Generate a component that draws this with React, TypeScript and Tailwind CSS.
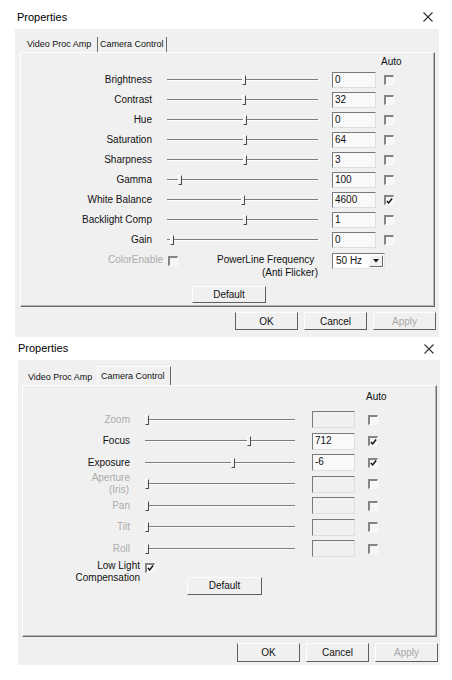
import React from "react";

// --- small classic win32 controls ---

function CloseX() {
  return (
    <svg width="10" height="10" viewBox="0 0 10 10" className="block">
      <path d="M0.5 0.5 L9.5 9.5 M9.5 0.5 L0.5 9.5" stroke="#333" strokeWidth="1.1" fill="none" />
    </svg>
  );
}

function Slider({ className, thumb }: { className: string; thumb: number }) {
  return (
    <div className={`relative h-[12px] ${className}`}>
      <div className="absolute left-0 right-0 top-[5px] h-[2px] border-t border-t-[#7d7d7d] border-b border-b-[#fdfdfd]" />
      <div
        className="absolute top-[1px] h-[10px] w-[4px] border-l border-t border-l-[#fdfdfd] border-t-[#fdfdfd] border-r border-b border-r-[#4a4a4a] border-b-[#4a4a4a] bg-[#f0f0f0]"
        style={{ left: thumb }}
      />
    </div>
  );
}

function EditBox({ value, className, disabled }: { value?: string; className: string; disabled?: boolean }) {
  return (
    <div
      className={`border-t border-l border-t-[#7a7a7a] border-l-[#7a7a7a] border-r border-b border-r-[#dedede] border-b-[#dedede] pl-[2px] text-[10px] leading-[14px] text-[#111] ${
        disabled ? "bg-[#f0f0f0]" : "bg-[#f9f9f9]"
      } ${className}`}
    >
      {value}
    </div>
  );
}

function Check({ checked }: { checked?: boolean }) {
  return (
    <div className="flex h-[10px] w-[10px] shrink-0 items-center justify-center border-t-2 border-l-2 border-t-[#858585] border-l-[#858585] border-r border-b border-r-[#fafafa] border-b-[#fafafa] bg-[#f6f6f6]">
      {checked && (
        <svg width="8" height="8" viewBox="0 0 8 8" className="block">
          <path d="M1 4 L3 6.2 L7 1.2" stroke="#111" strokeWidth="1.7" fill="none" />
        </svg>
      )}
    </div>
  );
}

function Btn({ label, className, disabled, dark }: { label: string; className: string; disabled?: boolean; dark?: boolean }) {
  return (
    <div
      className={`flex items-center justify-center border bg-[#f0f0f0] text-[10px] border-t-[#fdfdfd] border-r-[#5f5f5f] border-b-[#5f5f5f] ${
        dark ? "border-l-[#5f5f5f]" : "border-l-[#fdfdfd]"
      } ${disabled ? "text-[#a8a8a8]" : "text-[#111]"} ${className}`}
    >
      {label}
    </div>
  );
}

// --- data ---
const procRows = [
  { name: "Brightness", value: "0", thumb: 75 },
  { name: "Contrast", value: "32", thumb: 75 },
  { name: "Hue", value: "0", thumb: 76 },
  { name: "Saturation", value: "64", thumb: 76 },
  { name: "Sharpness", value: "3", thumb: 76 },
  { name: "Gamma", value: "100", thumb: 11 },
  { name: "White Balance", value: "4600", thumb: 74, auto: true },
  { name: "Backlight Comp", value: "1", thumb: 76 },
  { name: "Gain", value: "0", thumb: 3 },
];

const camRows = [
  { name: "Zoom", thumb: 0, disabled: true },
  { name: "Focus", value: "712", thumb: 102, auto: true },
  { name: "Exposure", value: "-6", thumb: 86, auto: true },
  { name: "Aperture", sub: "(Iris)", thumb: 0, disabled: true },
  { name: "Pan", thumb: 0, disabled: true },
  { name: "Tilt", thumb: 0, disabled: true },
  { name: "Roll", thumb: 0, disabled: true },
];

export default function App() {
  return (
    <div className="h-[680px] w-[452px] overflow-hidden bg-white font-['Liberation_Sans',Arial,sans-serif] text-[#111]">
      {/* ===== Dialog 1 : Video Proc Amp ===== */}
      <div className="flex h-[29px] items-center justify-between pl-[17px] pr-[19px] pt-[5px]">
        <span className="text-[11px] leading-[13px] text-black">Properties</span>
        <CloseX />
      </div>
      <div className="ml-[15px] h-[308px] w-[424px] bg-[#f0f0f0] pl-[5px] pt-[8px]">
        {/* tabs */}
        <div className="flex h-[15px] items-end whitespace-nowrap">
          <div className="h-[15px] w-[78px] border-r border-r-[#6a6a6a] pl-[7px] text-[9px] leading-[14px]">
            Video Proc Amp
          </div>
          <div className="h-[15px] w-[69px] border-r border-r-[#6a6a6a] pl-[2px] text-[9px] leading-[14px]">
            Camera Control
          </div>
        </div>
        <div className="h-[255px] w-[415px] border-l border-t border-l-[#fdfdfd] border-t-[#fdfdfd] border-r border-b border-r-[#6a6a6a] border-b-[#6a6a6a] shadow-[inset_-1px_-1px_0_#b4b4b4]">
          <div className="h-[17px] pl-[360px] pt-[3px] text-[10px] leading-[12px]">Auto</div>
          {procRows.map((r) => (
            <div key={r.name} className="flex h-[20px] items-center">
              <div className="w-[131px] text-right text-[10px] leading-[12px]">{r.name}</div>
              <Slider className="ml-[15px] w-[151px]" thumb={r.thumb} />
              <EditBox className="ml-[14px] h-[16px] w-[44px]" value={r.value} />
              <div className="ml-[8px]">
                <Check checked={r.auto} />
              </div>
            </div>
          ))}
          <div className="flex h-[36px] items-start">
            <div className="mt-[4px] w-[142px] text-right text-[10px] leading-[12px] text-[#ababab]">ColorEnable</div>
            <div className="ml-[5px] mt-[6px]">
              <Check />
            </div>
            <div className="ml-[39px] mt-[3px] w-[101px] text-right text-[10px] leading-[13px]">
              <div className="text-left">PowerLine Frequency</div>
              <div>(Anti Flicker)</div>
            </div>
            <div className="ml-[14px] mt-[3px] flex h-[16px] w-[53px] items-center justify-between border-t border-l border-t-[#7a7a7a] border-l-[#7a7a7a] border-r border-b border-r-[#e5e5e5] border-b-[#e5e5e5] bg-white pl-[3px] pr-[1px]">
              <span className="text-[10px] leading-[12px]">50 Hz</span>
              <div className="flex h-[12px] w-[14px] items-center justify-center border border-t-[#fdfdfd] border-l-[#fdfdfd] border-r-[#6a6a6a] border-b-[#6a6a6a] bg-[#f0f0f0]">
                <svg width="6" height="4" viewBox="0 0 6 4" className="block">
                  <path d="M0 0 L6 0 L3 3.5 Z" fill="#111" />
                </svg>
              </div>
            </div>
          </div>
          <div className="pl-[171px]">
            <Btn label="Default" className="h-[17px] w-[74px]" />
          </div>
        </div>
        <div className="mt-[5px] flex pl-[215px]">
          <Btn label="OK" className="h-[18px] w-[63px]" dark />
          <Btn label="Cancel" className="ml-[6px] h-[18px] w-[63px]" />
          <Btn label="Apply" className="ml-[6px] h-[18px] w-[63px]" disabled />
        </div>
      </div>

      {/* ===== Dialog 2 : Camera Control ===== */}
      <div className="flex h-[23px] items-center justify-between pl-[18px] pr-[18px]">
        <span className="text-[11px] leading-[13px] text-black">Properties</span>
        <CloseX />
      </div>
      <div className="ml-[18px] h-[305px] w-[422px] bg-[#f0f0f0] pl-[4px] pt-[6px]">
        {/* tabs */}
        <div className="flex h-[19px] items-end whitespace-nowrap">
          <div className="h-[15px] w-[75px] pl-[6px] text-[9px] leading-[14px]">Video Proc Amp</div>
          <div className="h-[19px] w-[74px] border-l border-t border-l-[#fdfdfd] border-t-[#fdfdfd] border-r border-r-[#6a6a6a] pl-[3px] pt-[2px] text-[9px] leading-[14px]">
            Camera Control
          </div>
        </div>
        <div className="h-[252px] w-[415px] border-l border-t border-l-[#fdfdfd] border-t-[#fdfdfd] border-r border-b border-r-[#6a6a6a] border-b-[#6a6a6a] shadow-[inset_-1px_-1px_0_#b4b4b4]">
          <div className="h-[23px] pl-[343px] pt-[5px] text-[10px] leading-[12px]">Auto</div>
          {camRows.map((r) => (
            <div key={r.name} className="flex h-[21.5px] items-center">
              <div
                className={`w-[107px] text-right text-[10px] leading-[12px] ${
                  r.disabled ? "text-[#ababab]" : "text-[#111]"
                }`}
              >
                <div>{r.name}</div>
                {r.sub && <div className="pr-[1px]">{r.sub}</div>}
              </div>
              <Slider className="ml-[15px] w-[150px]" thumb={r.thumb} />
              <EditBox className="ml-[17px] h-[17px] w-[43px]" value={r.value} disabled={r.disabled} />
              <div className="ml-[13px]">
                <Check checked={r.auto} />
              </div>
            </div>
          ))}
          <div className="flex items-start">
            <div className="w-[117px] text-right text-[10px] leading-[12px]">
              <div>Low Light</div>
              <div>Compensation</div>
            </div>
            <div className="ml-[5px] mt-[3px]">
              <Check checked />
            </div>
            <div className="ml-[32px] mt-[17px]">
              <Btn label="Default" className="h-[18px] w-[75px]" />
            </div>
          </div>
        </div>
        <div className="mt-[6px] flex pl-[215px]">
          <Btn label="OK" className="h-[19px] w-[63px]" dark />
          <Btn label="Cancel" className="ml-[6px] h-[19px] w-[63px]" />
          <Btn label="Apply" className="ml-[6px] h-[19px] w-[63px]" disabled />
        </div>
      </div>
    </div>
  );
}
